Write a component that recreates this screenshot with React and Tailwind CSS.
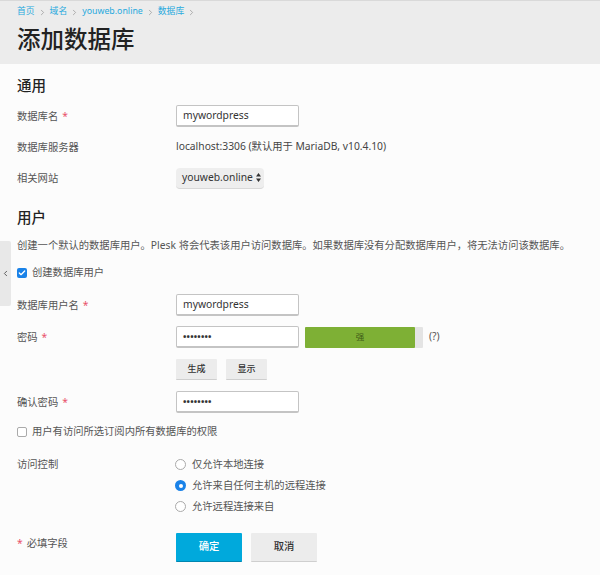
import { ChevronLeft, ChevronRight, Check } from 'lucide-react';

const FONT = "font-['Noto_Sans','Noto_Sans_CJK_SC',sans-serif]";

const Crumb = ({ children }) => (
  <>
    <span className="text-[#28aade]">{children}</span>
    <ChevronRight className="w-[9px] h-[9px] mx-[3px] text-[#999]" strokeWidth={2} />
  </>
);

const Req = () => <span className="text-[#e9516b] ml-[4px]">*</span>;

const TextInput = ({ value, dots }) => (
  <div className={`w-[123px] h-[22px] bg-white border border-[#c4c4c4] border-b-2 rounded-[2px] px-[6px] flex items-center text-[#333] ${dots ? 'text-[9px] tracking-[0.2px] font-bold' : 'text-[10.3px] pt-[1px]'}`}>
    {value}
  </div>
);

const Row = ({ label, req, children, className = '' }) => (
  <div className={`flex items-center ${className}`}>
    <div className="w-[159px] shrink-0 text-[#555] pt-[1px]">{label}{req && <Req />}</div>
    {children}
  </div>
);

const SmallBtn = ({ children }) => (
  <div className="h-[21px] w-[41px] bg-[#ececec] border-b border-[#cfcfcf] rounded-[1px] flex items-center justify-center text-[9px] font-medium text-[#333]">{children}</div>
);

const Radio = ({ label, on }) => (
  <div className="flex items-center h-[21px]">
    {on ? (
      <span className="w-[11px] h-[11px] rounded-full bg-[#1a82e8] flex items-center justify-center mr-[6px] ml-[-1px]">
        <span className="w-[4px] h-[4px] rounded-full bg-white" />
      </span>
    ) : (
      <span className="w-[11px] h-[11px] rounded-full border border-[#aaa] bg-white mr-[6px] ml-[-1px]" />
    )}
    <span className="text-[#555]">{label}</span>
  </div>
);

export default function App() {
  return (
    <div className={`${FONT} relative w-[600px] h-[575px] overflow-hidden bg-[#fcfcfc] text-[10.3px]`}>
      {/* Header */}
      <div className="h-[64px] bg-[#ececec] border-t border-[#d9d9d9] px-[17px]">
        <div className="flex items-center h-[21px] pt-[1px] text-[8.8px]">
          <Crumb>首页</Crumb>
          <Crumb>域名</Crumb>
          <Crumb>youweb.online</Crumb>
          <Crumb>数据库</Crumb>
        </div>
        <h1 className="text-[23.5px] leading-[32px] font-medium text-[#222] mt-[1px]">添加数据库</h1>
      </div>

      {/* Side toggle */}
      <div className="absolute left-0 top-[241px] w-[11px] h-[65px] bg-[#e8e8e8] rounded-r-[2px] flex items-center justify-center">
        <ChevronLeft className="w-[9px] h-[9px] text-[#555]" strokeWidth={2.5} />
      </div>

      <div className="px-[17px]">
        <h2 className="text-[14.5px] leading-[20px] font-medium text-[#222] mt-[11px]">通用</h2>
        <Row label="数据库名" req className="mt-[10px] h-[22px]"><TextInput value="mywordpress" /></Row>
        <Row label="数据库服务器" className="mt-[9px] h-[22px]">
          <span className="text-[#444]">localhost:3306 (默认用于 MariaDB, v10.4.10)</span>
        </Row>
        <Row label="相关网站" className="mt-[9px] h-[22px]">
          <div className="w-[88px] h-[21px] bg-[#eeeeee] border-b border-[#d8d8d8] rounded-[4px] flex items-center pl-[6px] text-[#333]">
            youweb.online
            <svg width="5" height="9" viewBox="0 0 5 9" className="ml-[3px]" fill="#333"><path d="M2.5 0 5 3.5H0ZM2.5 9 0 5.5H5Z" /></svg>
          </div>
        </Row>

        <h2 className="text-[14.5px] leading-[20px] font-medium text-[#222] mt-[18px]">用户</h2>
        <p className="mt-[10px] leading-[16px] text-[#555] whitespace-nowrap">创建一个默认的数据库用户。Plesk 将会代表该用户访问数据库。如果数据库没有分配数据库用户，将无法访问该数据库。</p>
        <div className="flex items-center mt-[12px] h-[16px]">
          <span className="w-[10px] h-[10px] rounded-[2px] bg-[#1a82e8] flex items-center justify-center mr-[5px]">
            <Check className="w-[8px] h-[8px] text-white" strokeWidth={4} />
          </span>
          <span className="text-[#555]">创建数据库用户</span>
        </div>
        <Row label="数据库用户名" req className="mt-[13px] h-[22px]"><TextInput value="mywordpress" /></Row>
        <Row label="密码" req className="mt-[10px] h-[22px]">
          <TextInput value="••••••••" dots />
          <div className="ml-[6px] w-[118px] h-[21px] bg-[#e4e4e4] rounded-[1px]">
            <div className="w-[110px] h-full bg-[#7eb035] rounded-[1px] flex items-center justify-center text-[8.5px] text-[#3d5a16]">强</div>
          </div>
          <span className="ml-[6px] text-[#555]">(?)</span>
        </Row>
        <div className="flex gap-[9px] ml-[159px] mt-[11px]">
          <SmallBtn>生成</SmallBtn>
          <SmallBtn>显示</SmallBtn>
        </div>
        <Row label="确认密码" req className="mt-[11px] h-[22px]"><TextInput value="••••••••" dots /></Row>
        <div className="flex items-center mt-[11px] h-[16px]">
          <span className="w-[10px] h-[10px] rounded-[2px] border border-[#aaa] bg-white mr-[5px]" />
          <span className="text-[#555]">用户有访问所选订阅内所有数据库的权限</span>
        </div>
        <div className="flex mt-[14px]">
          <div className="w-[159px] shrink-0 text-[#555] h-[21px] flex items-center">访问控制</div>
          <div>
            <Radio label="仅允许本地连接" />
            <Radio label="允许来自任何主机的远程连接" on />
            <Radio label="允许远程连接来自" />
          </div>
        </div>
        <div className="flex mt-[16px]">
          <div className="w-[159px] shrink-0 text-[#555] h-[21px] flex items-center"><span className="text-[#e9516b] mr-[4px]">*</span>必填字段</div>
          <div className="flex gap-[9px]">
            <div className="w-[66px] h-[29px] bg-[#00a9dc] border-b border-[#0086b0] rounded-[1px] flex items-center justify-center text-white font-medium">确定</div>
            <div className="w-[66px] h-[29px] bg-[#ececec] border-b border-[#cfcfcf] rounded-[1px] flex items-center justify-center text-[#333] font-medium">取消</div>
          </div>
        </div>
      </div>
    </div>
  );
}
